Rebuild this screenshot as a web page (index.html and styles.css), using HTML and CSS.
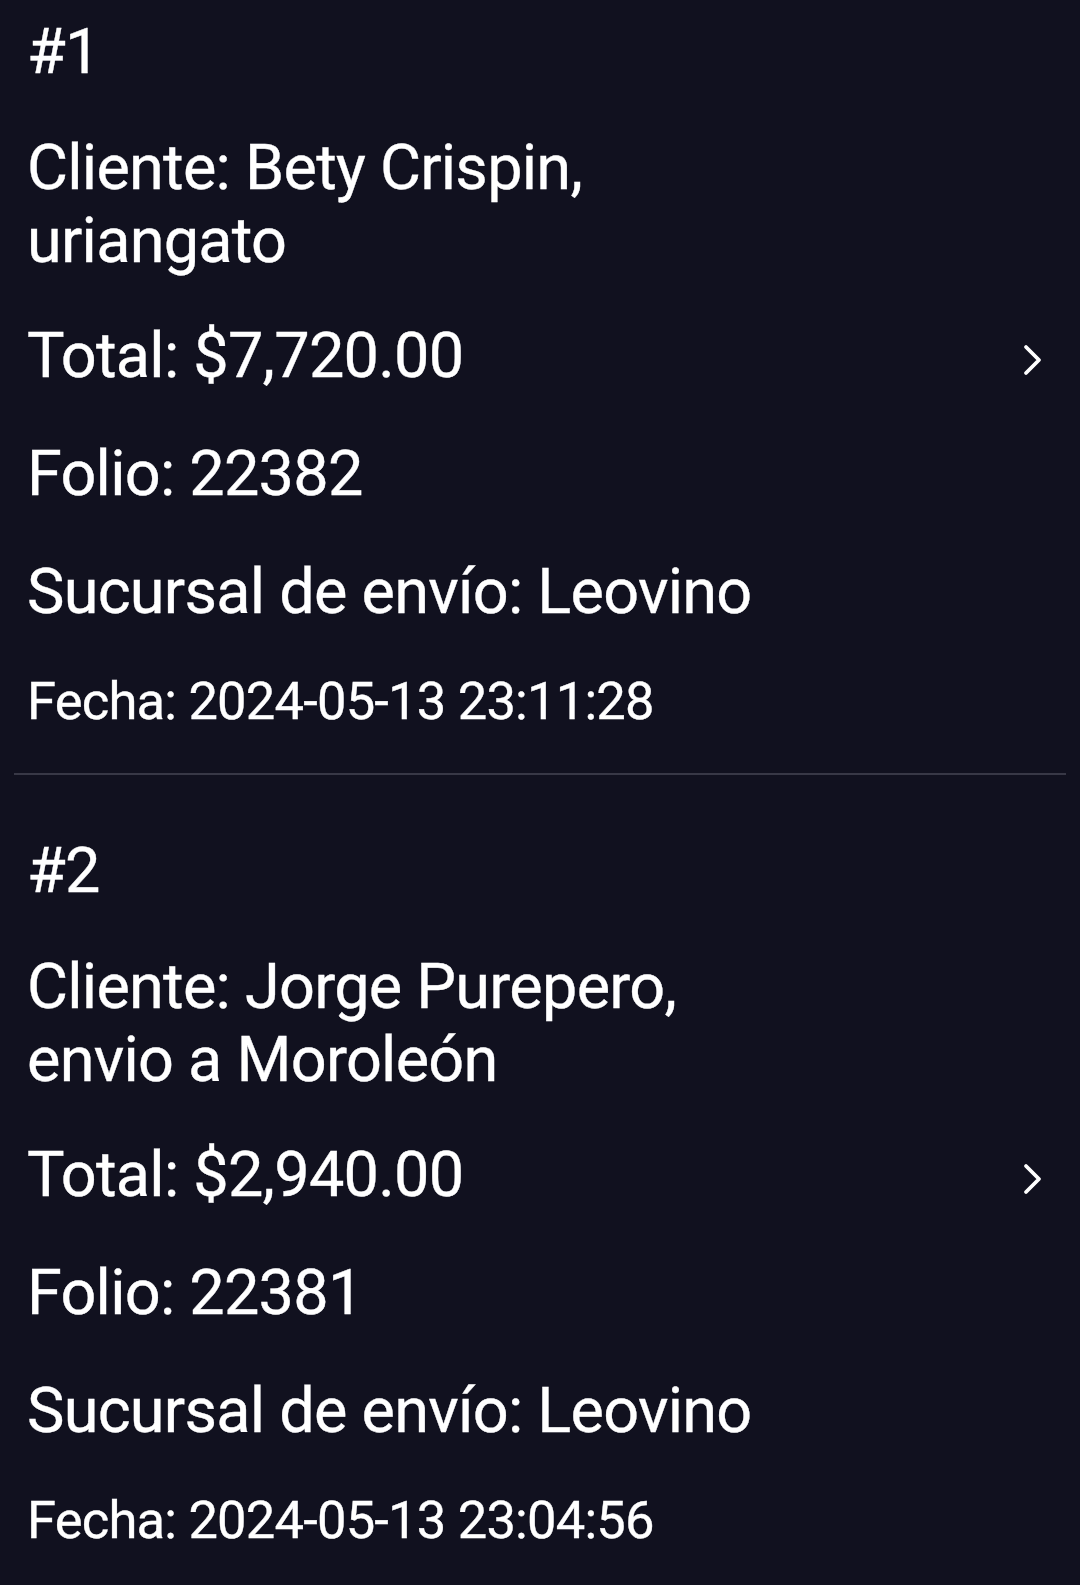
FILE: index.html
```html
<!DOCTYPE html>
<html lang="es">
<head>
    <meta charset="UTF-8">
    <meta name="viewport" content="width=device-width, initial-scale=1.0">
    <title>Pedidos</title>
    <link rel="stylesheet" href="styles.css">
</head>
<body>
    <!-- Lista de pedidos (desplazada un poco hacia arriba) -->
    <div class="list">
        <div class="order">
            <div class="info">
                <p class="num">#1</p>
                <p class="client">Cliente: Bety Crispin, uriangato</p>
                <p>Total: $7,720.00</p>
                <p>Folio: 22382</p>
                <p>Sucursal de envío: Leovino</p>
                <p class="date">Fecha: 2024-05-13 23:11:28</p>
            </div>
            <svg class="chev" width="20" height="32" viewBox="0 0 20 32">
                <polyline points="3,3 16,16 3,29" fill="none" stroke="#fff" stroke-width="3.8" stroke-linecap="round" stroke-linejoin="round"/>
            </svg>
        </div>
        <div class="divider"></div>
        <div class="order">
            <div class="info">
                <p class="num">#2</p>
                <p class="client">Cliente: Jorge Purepero, envio a Moroleón</p>
                <p>Total: $2,940.00</p>
                <p>Folio: 22381</p>
                <p>Sucursal de envío: Leovino</p>
                <p class="date">Fecha: 2024-05-13 23:04:56</p>
            </div>
            <svg class="chev" width="20" height="32" viewBox="0 0 20 32">
                <polyline points="3,3 16,16 3,29" fill="none" stroke="#fff" stroke-width="3.8" stroke-linecap="round" stroke-linejoin="round"/>
            </svg>
        </div>
        <div class="divider"></div>
    </div>
</body>
</html>
```

FILE: styles.css
```css
html, body {
    margin: 0;
    padding: 0;
    height: 100%;
    overflow: hidden;
    background: #11111f;
}
body {
    font-family: Roboto, "Noto Sans", Arial, sans-serif;
    color: #ffffff;
}
.list {
    margin-top: -44px;
}
.order {
    display: flex;
    align-items: center;
    padding: 65px 37px 50px 27px;
}
.info {
    width: 780px;
    display: flex;
    flex-direction: column;
    gap: 56px;
}
.info p {
    margin: 0;
    font-size: 63px;
    line-height: 62px;
    letter-spacing: -0.75px;
    -webkit-text-stroke: 0.35px #ffffff;
}
.info .client {
    line-height: 73px;
    margin: -8px 0;
}
.info .date {
    font-size: 52.5px;
    line-height: 44px;
    letter-spacing: -0.8px;
}
.chev {
    margin-left: auto;
    margin-bottom: 25px;
}
.divider {
    height: 2px;
    margin: 0 14px;
    background: #383846;
}
```
